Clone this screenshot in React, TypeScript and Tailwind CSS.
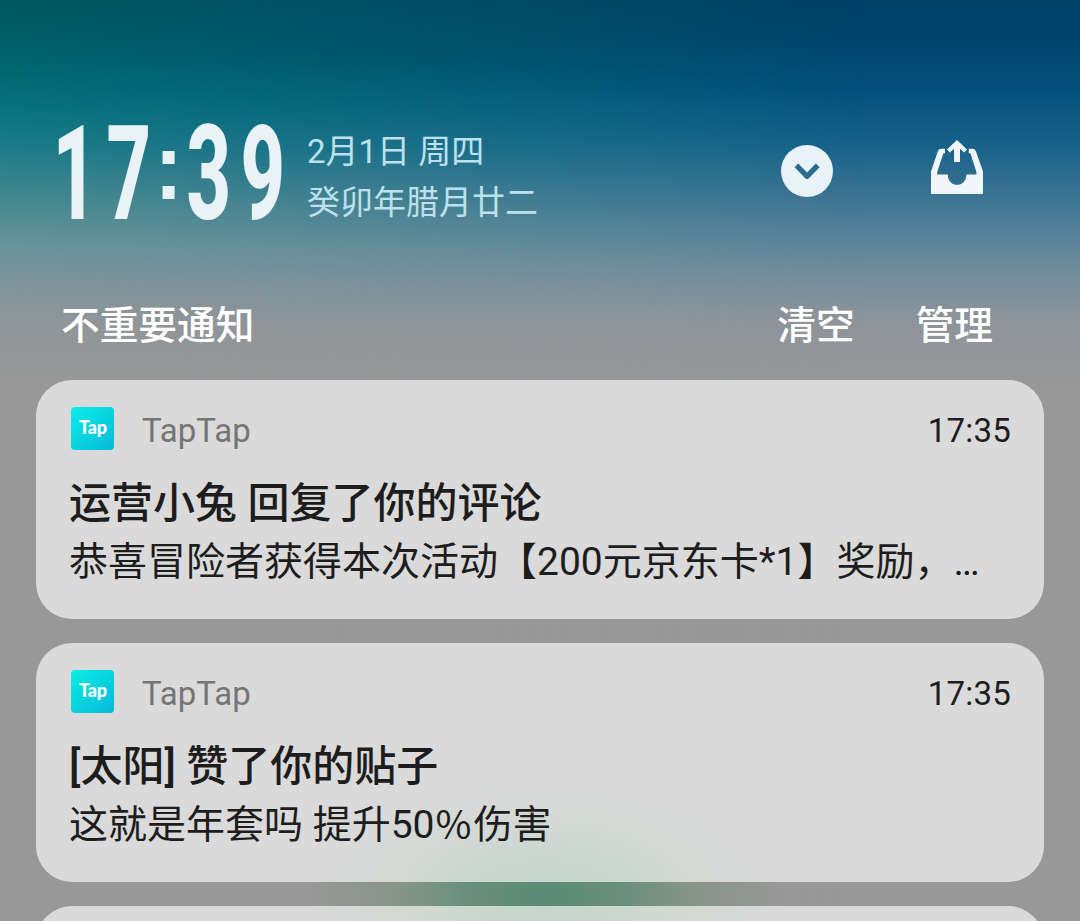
import { ReactNode } from "react";

const NOTIFICATIONS = [
  {
    id: 1,
    app: "TapTap",
    time: "17:35",
    title: "运营小兔 回复了你的评论",
    body: "恭喜冒险者获得本次活动【200元京东卡*1】奖励，…",
  },
  {
    id: 2,
    app: "TapTap",
    time: "17:35",
    title: "[太阳] 赞了你的贴子",
    body: (
      <>
        这就是年套吗 提升50
        <span className="-mt-[3px] mr-[2px] ml-px inline-block h-[58px] align-top font-['Noto_Sans_CJK_SC',sans-serif] leading-[58px]">
          %
        </span>
        伤害
      </>
    ),
  },
];

function Digit({ children }: { children: ReactNode }) {
  return (
    <span className="flex w-[54px] justify-center">
      <span className="block scale-x-[0.59]">{children}</span>
    </span>
  );
}

function Clock() {
  return (
    <div className="flex h-[100px] w-[238px] items-center text-[131px] leading-none font-extrabold text-[#e9f2f5]">
      <Digit>1</Digit>
      <Digit>7</Digit>
      <span className="flex w-[26px] justify-center pb-[14px] font-['Liberation_Sans',sans-serif] text-[94px]">
        <span className="block scale-x-90">:</span>
      </span>
      <Digit>3</Digit>
      <Digit>9</Digit>
    </div>
  );
}

function ExpandIcon() {
  return (
    <svg width="52" height="52" viewBox="0 0 52 52">
      <path
        fill="#e9f2f7"
        fillRule="evenodd"
        d="M26 0a26 26 0 1 1 0 52a26 26 0 0 1 0-52zM17.2 18.6l-3.6 3.6 10.6 11q1.8 1.8 3.6 0l10.9-11-3.9-3.6-8.8 8.8z"
      />
    </svg>
  );
}

function TrayIcon() {
  return (
    <svg width="52" height="54" viewBox="0 0 52 54" fill="#f1f6fa">
      <path d="M10.5 8.7H14v4.5h-1.6L6.2 32v2.4h10.6c0 13.9 18.6 13.9 18.6 0h10V32l-6-18.8h-1.6V8.7h3.7q2.6 0 3.5 2.8L52 31.5V53q0 1-1 1H1q-1 0-1-1V31.5l6.8-20q.9-2.8 3.7-2.8z" />
      <path d="M26 0l10 9.5-2.8 3-4.2-3.8V22h-6V8.7l-4.2 3.8-2.8-3z" />
    </svg>
  );
}

function AppIcon() {
  return (
    <div className="flex size-[43px] items-center justify-center rounded-[4px] bg-linear-to-br from-[#0ceee4] to-[#08b9da] pb-1 pl-px">
      <span className="font-['Lato'] text-[18px] leading-none font-black tracking-[-0.2px] text-white">
        Tap
      </span>
    </div>
  );
}

function NotificationCard({ app, time, title, body }: (typeof NOTIFICATIONS)[number]) {
  return (
    <article className="h-[239px] shrink-0 rounded-[36px] bg-[#fbfbfb]/67 pt-[27px] pr-[33px] pl-[33px] text-[#1d1d1d]">
      <header className="flex h-[43px] items-center pl-[2px]">
        <AppIcon />
        <span className="ml-7 pt-1 text-[33px] leading-none text-[#757575]">{app}</span>
        <time className="ml-auto pt-1 text-[33px] leading-none tracking-[0.2px]">{time}</time>
      </header>
      <h3 className="mt-[25px] text-[42px] leading-[58px] font-medium whitespace-nowrap">{title}</h3>
      <p className="text-[39px] leading-[58px] whitespace-nowrap">{body}</p>
    </article>
  );
}

export default function App() {
  return (
    <div className="relative isolate h-[921px] w-[1080px] overflow-hidden bg-[#989898] font-['Roboto','Noto_Sans_CJK_SC',sans-serif]">
      {/* Blurred wallpaper */}
      <div className="absolute inset-0 -z-10 bg-[linear-gradient(to_bottom,#004168_0px,#00446c_40px,#04507c_90px,#17628a_145px,#377191_190px,#57829a_235px,#7a8f9b_285px,#8f949a_325px,#989898_390px)]" />
      <div className="absolute inset-0 -z-10 bg-[linear-gradient(to_bottom,#00585f_0px,#00646c_60px,#08747c_110px,#1f7c88_150px,#45898f_200px,#679398_245px,#80949a_285px,#919698_330px,#989898_390px)] [mask-image:linear-gradient(to_right,black,transparent_80%)]" />
      <div className="absolute bottom-[-100px] left-[305px] -z-10 h-[250px] w-[480px] bg-[radial-gradient(closest-side,#588b72,#6b8f7e_35%,#859488_60%,#98989800)]" />

      <header className="flex h-[256px] items-start pt-[124px] pr-[97px] pl-[48px]">
        <Clock />
        <div className="mt-[2px] ml-[21px] text-[33px] leading-[51px] whitespace-nowrap text-[#bde0ec]">
          <p>2月1日 周四</p>
          <p>癸卯年腊月廿二</p>
        </div>
        <div className="mt-4 ml-auto flex items-start gap-[98px]">
          <div className="pt-[5px]">
            <ExpandIcon />
          </div>
          <TrayIcon />
        </div>
      </header>

      <div className="flex h-[124px] items-start pt-[42px] pr-[87px] pl-[61px] text-[38.7px] leading-[56px] font-medium text-white">
        <h2>不重要通知</h2>
        <button className="ml-auto">清空</button>
        <button className="ml-[61px]">管理</button>
      </div>

      <main className="flex flex-col gap-6 px-9">
        {NOTIFICATIONS.map((n) => (
          <NotificationCard key={n.id} {...n} />
        ))}
        <article className="h-[239px] shrink-0 rounded-[36px] bg-[#fbfbfb]/67" />
      </main>
    </div>
  );
}
